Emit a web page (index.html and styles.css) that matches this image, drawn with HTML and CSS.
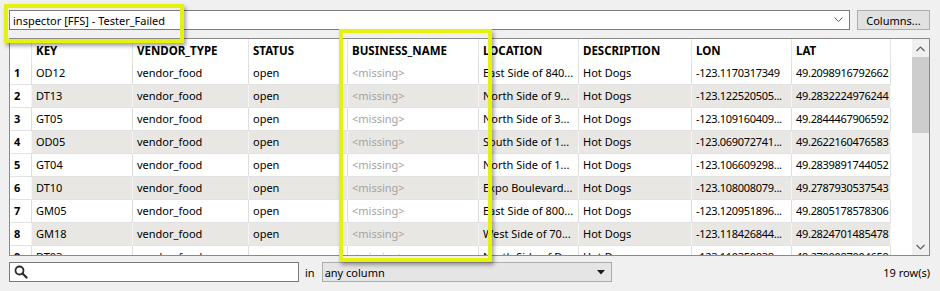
FILE: index.html
```html
<!DOCTYPE html>
<html>
<head>
<meta charset="utf-8">
<link rel="stylesheet" href="styles.css">
</head>
<body>
<div class="app">
  <div class="topbar">
    <div class="combo">
      <span class="combo-text">inspector [FFS] - Tester_Failed</span>
      <svg class="chev" width="9" height="6" viewBox="0 0 9 6"><path d="M0.5 0.5 L4.5 4.5 L8.5 0.5" fill="none" stroke="#5a5a5a" stroke-width="1"/></svg>
    </div>
    <button class="btn">Columns...</button>
  </div>

  <div class="table">
    <div class="grid-area">
      <div class="row head">
        <div class="c rn"></div><div class="c">KEY</div><div class="c">VENDOR_TYPE</div><div class="c">STATUS</div><div class="c">BUSINESS_NAME</div><div class="c">LOCATION</div><div class="c">DESCRIPTION</div><div class="c">LON</div><div class="c">LAT</div>
      </div>
      <div class="row">
        <div class="c rn">1</div><div class="c">OD12</div><div class="c">vendor_food</div><div class="c">open</div><div class="c miss">&lt;missing&gt;</div><div class="c">East Side of 840...</div><div class="c">Hot Dogs</div><div class="c num">-123.1170317349</div><div class="c num">49.2098916792662</div>
      </div>
      <div class="row alt">
        <div class="c rn">2</div><div class="c">DT13</div><div class="c">vendor_food</div><div class="c">open</div><div class="c miss">&lt;missing&gt;</div><div class="c">North Side of 9...</div><div class="c">Hot Dogs</div><div class="c num">-123.122520505...</div><div class="c num">49.2832224976244</div>
      </div>
      <div class="row">
        <div class="c rn">3</div><div class="c">GT05</div><div class="c">vendor_food</div><div class="c">open</div><div class="c miss">&lt;missing&gt;</div><div class="c">North Side of 3...</div><div class="c">Hot Dogs</div><div class="c num">-123.109160409...</div><div class="c num">49.2844467906592</div>
      </div>
      <div class="row alt">
        <div class="c rn">4</div><div class="c">OD05</div><div class="c">vendor_food</div><div class="c">open</div><div class="c miss">&lt;missing&gt;</div><div class="c">South Side of 1...</div><div class="c">Hot Dogs</div><div class="c num">-123.069072741...</div><div class="c num">49.2622160476583</div>
      </div>
      <div class="row">
        <div class="c rn">5</div><div class="c">GT04</div><div class="c">vendor_food</div><div class="c">open</div><div class="c miss">&lt;missing&gt;</div><div class="c">North Side of 1...</div><div class="c">Hot Dogs</div><div class="c num">-123.106609298...</div><div class="c num">49.2839891744052</div>
      </div>
      <div class="row alt">
        <div class="c rn">6</div><div class="c">DT10</div><div class="c">vendor_food</div><div class="c">open</div><div class="c miss">&lt;missing&gt;</div><div class="c">Expo Boulevard...</div><div class="c">Hot Dogs</div><div class="c num">-123.108008079...</div><div class="c num">49.2787930537543</div>
      </div>
      <div class="row">
        <div class="c rn">7</div><div class="c">GM05</div><div class="c">vendor_food</div><div class="c">open</div><div class="c miss">&lt;missing&gt;</div><div class="c">East Side of 800...</div><div class="c">Hot Dogs</div><div class="c num">-123.120951896...</div><div class="c num">49.2805178578306</div>
      </div>
      <div class="row alt">
        <div class="c rn">8</div><div class="c">GM18</div><div class="c">vendor_food</div><div class="c">open</div><div class="c miss">&lt;missing&gt;</div><div class="c">West Side of 70...</div><div class="c">Hot Dogs</div><div class="c num">-123.118426844...</div><div class="c num">49.2824701485478</div>
      </div>
      <div class="row">
        <div class="c rn">9</div><div class="c">DT03</div><div class="c">vendor_food</div><div class="c">open</div><div class="c miss">&lt;missing&gt;</div><div class="c">North Side of D...</div><div class="c">Hot Dogs</div><div class="c num">-123.110350838...</div><div class="c num">49.2790087004659</div>
      </div>
    </div>
    <div class="scrollbar">
      <svg class="sarrow" width="9" height="6" viewBox="0 0 9 6"><path d="M0.5 5 L4.5 1 L8.5 5" fill="none" stroke="#606060" stroke-width="1.2"/></svg>
      <div class="thumb"></div>
      <div class="track"></div>
      <svg class="sarrow" width="9" height="6" viewBox="0 0 9 6"><path d="M0.5 1 L4.5 5 L8.5 1" fill="none" stroke="#606060" stroke-width="1.2"/></svg>
    </div>
  </div>

  <div class="bottombar">
    <div class="search">
      <svg width="14" height="14" viewBox="0 0 14 14"><circle cx="5.5" cy="5.5" r="4" fill="none" stroke="#2b2b2b" stroke-width="1.8"/><path d="M8.5 8.5 L12.5 12.5" stroke="#2b2b2b" stroke-width="2.2" stroke-linecap="round"/></svg>
    </div>
    <span class="in">in</span>
    <div class="select">
      <span>any column</span>
      <svg width="8" height="5" viewBox="0 0 8 5"><path d="M0 0 H8 L4 4.5 Z" fill="#1a1a1a"/></svg>
    </div>
    <span class="count">19 row(s)</span>
  </div>

  <div class="hl hl1"></div>
  <div class="hl hl2"></div>
</div>
</body>
</html>
```

FILE: styles.css
```css
html, body {
  margin: 0;
  padding: 0;
  background: #f0f0f0;
}
body {
  font-family: "Noto Sans", "Open Sans", sans-serif;
  font-size: 11px;
  color: #000;
}
.app {
  position: relative;
  width: 940px;
  height: 291px;
  box-sizing: border-box;
  padding: 10px 10px 0 9px;
}
.topbar {
  display: flex;
  gap: 7px;
  height: 20px;
}
.combo {
  flex: 1;
  box-sizing: border-box;
  border: 1px solid #7a7a7a;
  background: #fff;
  display: flex;
  align-items: center;
  padding: 0 6px 0 3px;
}
.combo-text { flex: 1; }
.btn {
  width: 73px;
  height: 20px;
  box-sizing: border-box;
  border: 1px solid #adadad;
  background: #e1e1e1;
  font: inherit;
  color: #000;
  padding: 0;
}
.table {
  margin-top: 8px;
  height: 218px;
  box-sizing: border-box;
  border: 1px solid #8a8a8a;
  background: #fff;
  display: flex;
  overflow: hidden;
}
.grid-area {
  flex: 1;
  overflow: hidden;
}
.row {
  display: grid;
  grid-template-columns: 22px 101px 116px 99px 131px 100px 113px 100px 99px;
  height: 23px;
}
.row.alt .c:not(.rn) { background: #e8e7e3; }
.c {
  box-sizing: border-box;
  border-right: 1px solid #dedede;
  border-bottom: 1px solid #e2e2e2;
  padding: 0 0 0 4px;
  line-height: 22px;
  white-space: nowrap;
  overflow: hidden;
}
.num { letter-spacing: -0.3px; }
.row.alt .c { border-right-color: #f4f4f4; }
.head .c {
  font-weight: bold;
  font-size: 11.5px;
  border-bottom: none;
  border-right-color: #e4e4e4;
  line-height: 23px;
}
.rn {
  font-weight: bold;
  padding-left: 4px;
  background: #fff;
}
.miss { color: #a3a3a3; }
.scrollbar {
  width: 17px;
  background: #f0f0f0;
  display: flex;
  flex-direction: column;
  align-items: center;
}
.sarrow { margin: 7px 0 5px; flex: none; }
.thumb {
  width: 17px;
  height: 76px;
  background: #cdcdcd;
  flex: none;
}
.track { flex: 1; }
.bottombar {
  display: flex;
  align-items: center;
  height: 20px;
  margin-top: 6px;
}
.search {
  width: 290px;
  height: 20px;
  box-sizing: border-box;
  border: 1px solid #7a7a7a;
  background: #fff;
  display: flex;
  align-items: center;
  padding-left: 4px;
}
.in { margin: 0 7px 0 6px; }
.select {
  width: 290px;
  height: 20px;
  box-sizing: border-box;
  border: 1px solid #adadad;
  background: #e5e5e5;
  display: flex;
  align-items: center;
  justify-content: space-between;
  padding: 0 6px 0 2px;
}
.count { margin-left: auto; }
.hl {
  position: absolute;
  box-sizing: border-box;
  border: 4px solid #e4f20e;
  box-shadow: 2px 3px 4px rgba(0,0,0,0.35);
}
.hl1 { left: 4px; top: 4px; width: 180px; height: 39px; }
.hl2 { left: 339px; top: 29px; width: 153px; height: 233px; }
```
